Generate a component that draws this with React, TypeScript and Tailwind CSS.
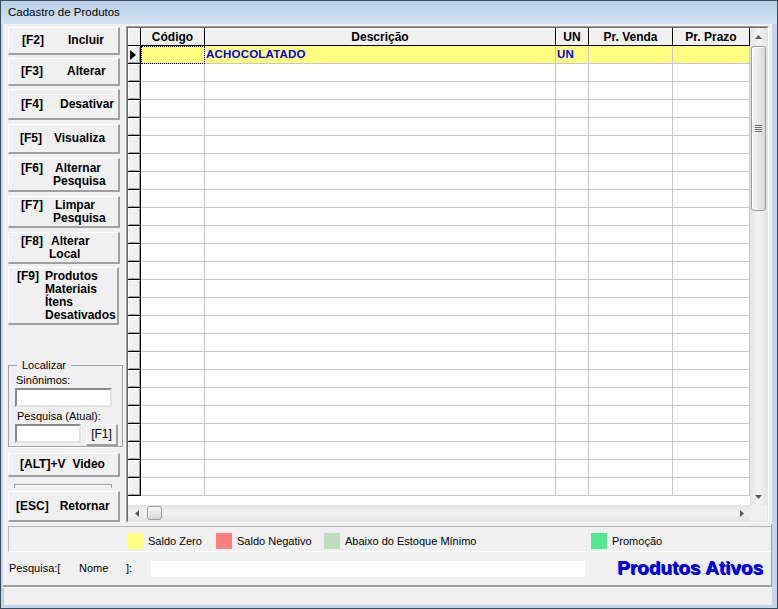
import React from "react";

function Btn({ className, children }: { className: string; children: React.ReactNode }) {
  return (
    <div
      className={`flex items-center bg-[#f0f0f0] border-t border-l border-t-white border-l-white border-r-2 border-b-2 border-r-[#a0a0a0] border-b-[#a0a0a0] font-bold text-[12px] leading-[13px] text-black ${className}`}
    >
      {children}
    </div>
  );
}

function Arrow({ dir }: { dir: "up" | "down" | "left" | "right" }) {
  const pts = {
    up: "0,4 3.5,0 7,4",
    down: "0,0 7,0 3.5,4",
    left: "4,0 4,7 0,3.5",
    right: "0,0 4,3.5 0,7",
  }[dir];
  const vertical = dir === "up" || dir === "down";
  return (
    <svg width={vertical ? 7 : 4} height={vertical ? 4 : 7}>
      <polygon points={pts} fill="#5a5a5a" />
    </svg>
  );
}

const headers = ["", "Código", "Descrição", "UN", "Pr. Venda", "Pr. Prazo"];

function Grid() {
  const rows = Array.from({ length: 25 }, (_, i) => i);
  return (
    <div className="ml-[3px] mt-[2px] w-[643px] h-[497px] border-t border-l border-t-[#a0a0a0] border-l-[#a0a0a0] border-r border-b border-r-white border-b-white">
      <div className="w-full h-full border-t border-l border-t-[#696969] border-l-[#696969] border-r border-b border-r-[#e3e3e3] border-b-[#e3e3e3] flex flex-col">
        <div className="flex h-[477px]">
          {/* table */}
          <div className="w-[622px] h-full bg-white">
            <div className="grid grid-cols-[13px_64px_351px_33px_84px_77px]">
              {headers.map((h, i) => (
                <div
                  key={"h" + i}
                  className="h-[18px] bg-[#f0f0f0] border-r border-b border-black shadow-[inset_1px_1px_0_#ffffff] flex items-center justify-center font-bold text-[12px] leading-none"
                >
                  {h}
                </div>
              ))}
              {rows.map((r) => (
                <React.Fragment key={r}>
                  <div className="h-[18px] bg-[#f0f0f0] border-r border-b border-black shadow-[inset_1px_1px_0_#ffffff,inset_-1px_-1px_0_#a0a0a0] flex items-center pl-[2px]">
                    {r === 0 && (
                      <svg width="6" height="10">
                        <polygon points="0,0 6,5 0,10" fill="#000" />
                      </svg>
                    )}
                  </div>
                  <div
                    className={`h-[18px] border-r border-b border-[#c8c8c8] ${
                      r === 0 ? "bg-[#ffff80] outline-1 outline-dotted outline-black -outline-offset-1" : ""
                    }`}
                  />
                  <div
                    className={`h-[18px] border-r border-b border-[#c8c8c8] flex items-center pl-[1px] font-bold text-[11.5px] tracking-[0.2px] text-[#0000ff] ${
                      r === 0 ? "bg-[#ffff80]" : ""
                    }`}
                  >
                    {r === 0 ? "ACHOCOLATADO" : ""}
                  </div>
                  <div
                    className={`h-[18px] border-r border-b border-[#c8c8c8] flex items-center pl-[1px] font-bold text-[11.5px] tracking-[0.2px] text-[#0000ff] ${
                      r === 0 ? "bg-[#ffff80]" : ""
                    }`}
                  >
                    {r === 0 ? "UN" : ""}
                  </div>
                  <div className={`h-[18px] border-r border-b border-[#c8c8c8] ${r === 0 ? "bg-[#ffff80]" : ""}`} />
                  <div className={`h-[18px] border-r border-b border-[#c8c8c8] ${r === 0 ? "bg-[#ffff80]" : ""}`} />
                </React.Fragment>
              ))}
            </div>
          </div>
          {/* vertical scrollbar */}
          <div className="w-[17px] h-full flex flex-col bg-linear-to-r from-[#e4e4e4] via-[#f3f3f3] to-[#e4e4e4]">
            <div className="h-[17px] flex items-center justify-center">
              <Arrow dir="up" />
            </div>
            <div className="mt-[1px] mx-[1px] h-[165px] rounded-[3px] border border-[#9a9a9a] bg-linear-to-r from-[#f6f6f6] to-[#d9d9d9] shadow-[inset_1px_1px_0_#ffffff] flex flex-col items-center justify-center gap-[1px]">
              <div className="w-[7px] h-[1px] bg-[#6e6e6e]" />
              <div className="w-[7px] h-[1px] bg-[#6e6e6e]" />
              <div className="w-[7px] h-[1px] bg-[#6e6e6e]" />
              <div className="w-[7px] h-[1px] bg-[#6e6e6e]" />
            </div>
            <div className="mt-auto h-[17px] flex items-center justify-center">
              <Arrow dir="down" />
            </div>
          </div>
        </div>
        {/* horizontal scrollbar */}
        <div className="flex h-[16px]">
          <div className="w-[622px] flex items-center bg-linear-to-b from-[#e4e4e4] via-[#f3f3f3] to-[#e4e4e4]">
            <div className="w-[17px] h-full flex items-center justify-center">
              <Arrow dir="left" />
            </div>
            <div className="ml-[2px] w-[15px] h-[14px] rounded-[3px] border border-[#9a9a9a] bg-linear-to-b from-[#f6f6f6] to-[#d9d9d9] shadow-[inset_1px_1px_0_#ffffff]" />
            <div className="ml-auto w-[17px] h-full flex items-center justify-center">
              <Arrow dir="right" />
            </div>
          </div>
          <div className="w-[17px] h-full bg-[#f0f0f0]" />
        </div>
      </div>
    </div>
  );
}

function TwoLine({ keyW, keyLabel, first, second }: { keyW: string; keyLabel: string; first: string; second: string }) {
  return (
    <div className="flex">
      <span className={keyW}>{keyLabel}</span>
      <div className="flex flex-col">
        <span className="ml-[2px]">{first}</span>
        <span>{second}</span>
      </div>
    </div>
  );
}

function LeftColumn() {
  return (
    <div className="ml-[5px] w-[115px] pt-[3px] flex flex-col">
      <Btn className="h-[28px] w-[112px] pl-[13px] gap-[24px]">
        <span>[F2]</span>
        <span>Incluir</span>
      </Btn>
      <Btn className="mt-[3px] h-[28px] w-[112px] pl-[12px] gap-[24px]">
        <span>[F3]</span>
        <span>Alterar</span>
      </Btn>
      <Btn className="mt-[3px] h-[31px] w-[112px] pl-[12px] gap-[17px]">
        <span>[F4]</span>
        <span>Desativar</span>
      </Btn>
      <Btn className="mt-[4px] h-[30px] w-[112px] pl-[11px] gap-[12px]">
        <span>[F5]</span>
        <span>Visualiza</span>
      </Btn>
      <Btn className="mt-[4px] h-[34px] w-[112px] pl-[12px]">
        <TwoLine keyW="w-[32px]" keyLabel="[F6]" first="Alternar" second="Pesquisa" />
      </Btn>
      <Btn className="mt-[4px] h-[32px] w-[112px] pl-[12px]">
        <TwoLine keyW="w-[32px]" keyLabel="[F7]" first="Limpar" second="Pesquisa" />
      </Btn>
      <Btn className="mt-[4px] h-[32px] w-[112px] pl-[12px]">
        <TwoLine keyW="w-[28px]" keyLabel="[F8]" first="Alterar" second="Local" />
      </Btn>
      <Btn className="mt-[3px] h-[58px] w-[111px] pl-[8px]">
        <div className="flex">
          <span className="w-[28px]">[F9]</span>
          <div className="flex flex-col">
            <span>Produtos</span>
            <span>Materiais</span>
            <span>Ítens</span>
            <span>Desativados</span>
          </div>
        </div>
      </Btn>

      <fieldset className="mt-[34px] w-[115px] h-[88px] border border-[#a0a0a0] shadow-[1px_1px_0_#ffffff] pl-[6px] text-[11px] leading-[13px]">
        <legend className="ml-[2px] px-[5px]">Localizar</legend>
        <div className="mt-[2px] pl-[1px]">Sinônimos:</div>
        <div className="mt-[1px] w-[97px] h-[19px] bg-white border-2 border-t-[#8a8a8a] border-l-[#8a8a8a] border-r-[#e3e3e3] border-b-[#e3e3e3]" />
        <div className="mt-[3px] pl-[2px]">Pesquisa (Atual):</div>
        <div className="mt-[1px] flex items-start">
          <div className="w-[66px] h-[19px] bg-white border-2 border-t-[#8a8a8a] border-l-[#8a8a8a] border-r-[#e3e3e3] border-b-[#e3e3e3]" />
          <div className="ml-[5px] w-[32px] h-[22px] flex items-center justify-center bg-[#f0f0f0] border-t border-l border-t-white border-l-white border-r-2 border-b-2 border-r-[#a0a0a0] border-b-[#a0a0a0] text-[12px]">
            [F1]
          </div>
        </div>
      </fieldset>

      <Btn className="mt-[6px] h-[24px] w-[112px] pl-[11px] gap-[7px]">
        <span>[ALT]+V</span>
        <span>Video</span>
      </Btn>
      <div className="mt-[7px] ml-[6px] w-[98px] h-[4px] border-t border-l border-r border-[#a0a0a0] shadow-[inset_1px_1px_0_#ffffff]" />
      <Btn className="mt-[3px] h-[31px] w-[112px] pl-[7px] gap-[11px]">
        <span>[ESC]</span>
        <span>Retornar</span>
      </Btn>
    </div>
  );
}

function Legend({ w, color, label }: { w: string; color: string; label: string }) {
  return (
    <div className={`flex items-center ${w}`}>
      <div className={`w-[16px] h-[16px] ${color}`} />
      <span className="ml-[5px]">{label}</span>
    </div>
  );
}

export default function App() {
  return (
    <div className="w-[778px] h-[609px] flex flex-col border border-[#3e4c5c] bg-[#c2d7ed] font-['Liberation_Sans',Arial,sans-serif] text-black overflow-hidden">
      <div className="h-[23px] flex items-center pl-[7px] pt-[1px] bg-linear-to-b from-[#b9d0e9] to-[#d0e1f3] text-[11.5px]">
        Cadastro de Produtos
      </div>
      <div className="ml-[2px] mr-[5px] mb-[3px] flex-1 flex flex-col bg-[#f0f0f0]">
        <div className="flex h-[500px]">
          <LeftColumn />
          <Grid />
        </div>

        <div className="h-[62px] flex flex-col border-r border-b border-[#a0a0a0]">
          <div className="mt-[2px] ml-[5px] h-[26px] flex items-center pl-[118px] pt-[4px] border-t border-l border-[#b4b4b4] border-b border-b-white text-[11px]">
            <Legend w="w-[89px]" color="bg-[#ffff80]" label="Saldo Zero" />
            <Legend w="w-[108px]" color="bg-[#ff8080]" label="Saldo Negativo" />
            <Legend w="w-[267px]" color="bg-[#c0dcc0]" label="Abaixo do Estoque Mínimo" />
            <Legend w="w-[150px]" color="bg-[#50e890]" label="Promoção" />
          </div>
          <div className="flex-1 flex items-center pl-[6px] text-[11px]">
            <span className="w-[70px]">Pesquisa:[</span>
            <span className="w-[47px]">Nome</span>
            <span className="w-[25px]">]:</span>
            <div className="w-[434px] h-[16px] bg-white" />
            <span className="ml-[32px] font-bold text-[19px] text-[#0000ff] [text-shadow:1px_1px_0_#00007f]">
              Produtos Ativos
            </span>
          </div>
        </div>

        <div className="flex-1 border-t border-[#a0a0a0] shadow-[inset_0_1px_0_#ffffff,inset_1px_0_0_#c8c8c8]" />
      </div>
    </div>
  );
}
